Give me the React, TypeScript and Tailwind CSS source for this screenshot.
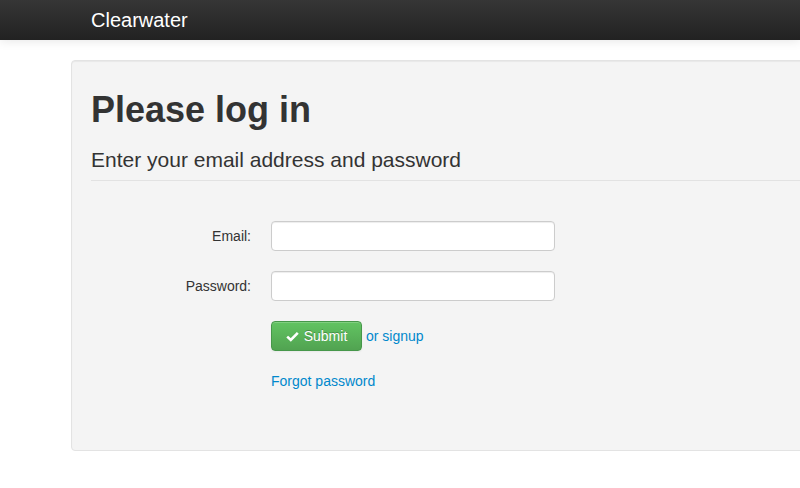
export default function App() {
  return (
    <div className="w-full h-screen overflow-hidden bg-white text-[14px] leading-5 text-[#333] font-['Liberation_Sans',Arial,sans-serif]">
      {/* Navbar */}
      <div className="relative z-10 h-10 bg-gradient-to-b from-[#363636] to-[#222] shadow-[0_1px_10px_rgba(0,0,0,0.1)]">
        <div className="pl-[71px]">
          <a className="block w-fit px-5 py-[10px] text-[20px] leading-5 text-white">Clearwater</a>
        </div>
      </div>

      {/* Content */}
      <div className="pl-[71px] pt-5">
        <div className="w-[940px] rounded border border-[#e3e3e3] bg-[#f4f4f4] p-[19px] shadow-[inset_0_1px_1px_rgba(0,0,0,0.05)]">
          <h1 className="mt-[10px] text-[36px] leading-10 font-bold text-[#333]">Please log in</h1>
          <h3 className="mt-[19px] border-b border-[#e2e2e2] pb-[9px] text-[21px] leading-[22px] text-[#333]">
            Enter your email address and password
          </h3>

          <form className="mt-10 flex flex-col gap-5" onSubmit={(e) => e.preventDefault()}>
            <div className="flex items-center">
              <label className="w-[160px] text-right">Email:</label>
              <input
                type="email"
                className="ml-5 h-[30px] w-[284px] rounded border border-[#ccc] bg-white px-[6px] shadow-[inset_0_1px_1px_rgba(0,0,0,0.075)] outline-none"
              />
            </div>
            <div className="flex items-center">
              <label className="w-[160px] text-right">Password:</label>
              <input
                type="password"
                className="ml-5 h-[30px] w-[284px] rounded border border-[#ccc] bg-white px-[6px] shadow-[inset_0_1px_1px_rgba(0,0,0,0.075)] outline-none"
              />
            </div>
            <div className="flex items-center pl-[180px]">
              <button
                type="submit"
                className="flex h-[30px] w-[91px] items-center justify-center gap-[5px] rounded border border-[#46974a] bg-gradient-to-b from-[#62c462] to-[#51a351] text-[14px] text-white [text-shadow:0_-1px_0_rgba(0,0,0,0.25)] shadow-[inset_0_1px_0_rgba(255,255,255,0.2),0_1px_2px_rgba(0,0,0,0.05)]"
              >
                <svg width="13" height="11" viewBox="0 0 13 11" fill="none">
                  <path d="M1.2 5.6 L4.8 9 L11.8 1.8" stroke="white" strokeWidth="2.6" strokeLinecap="butt" strokeLinejoin="miter" />
                </svg>
                Submit
              </button>
              <a className="ml-[4px] text-[#0088cc]">or signup</a>
            </div>
            <div className="pl-[180px] pb-10">
              <a className="text-[#0088cc]">Forgot password</a>
            </div>
          </form>
        </div>
      </div>
    </div>
  );
}
